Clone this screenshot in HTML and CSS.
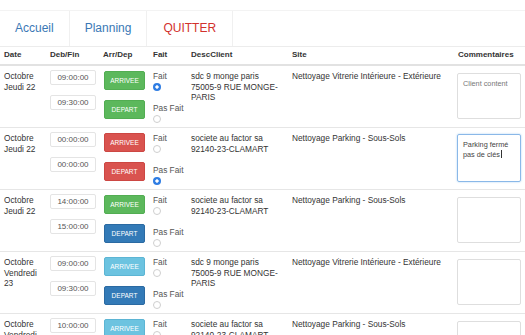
FILE: index.html
```html
<!DOCTYPE html>
<html lang="fr">
<head>
<meta charset="UTF-8">
<meta name="viewport" content="width=device-width, initial-scale=1.0">
<title>Planning</title>
<link rel="stylesheet" href="styles.css">
</head>
<body>

<div class="nav">
    <a href="#" class="tab">Accueil</a>
    <a href="#" class="tab">Planning</a>
    <a href="#" class="tab quit">QUITTER</a>
</div>

<table class="planning">
  <colgroup>
    <col class="c-date"><col class="c-time"><col class="c-btn"><col class="c-fait">
    <col class="c-desc"><col class="c-site"><col class="c-com">
  </colgroup>
  <thead>
    <tr>
      <th>Date</th><th>Deb/Fin</th><th>Arr/Dep</th><th>Fait</th>
      <th>DescClient</th><th>Site</th><th class="com">Commentaires</th>
    </tr>
  </thead>
  <tbody>
    <tr>
      <td>Octobre Jeudi 22</td>
      <td><div class="time">09:00:00</div><div class="time">09:30:00</div></td>
      <td><button class="btn green">ARRIVEE</button><button class="btn green">DEPART</button></td>
      <td class="fait">
        <label>Fait</label><input type="radio" name="r1" checked>
        <label class="pas">Pas Fait</label><input type="radio" name="r1">
      </td>
      <td class="desc">sdc 9 monge paris 75005-9 RUE MONGE-PARIS</td>
      <td>Nettoyage Vitrerie Intérieure - Extérieure</td>
      <td class="com"><textarea class="note" placeholder="Client content"></textarea></td>
    </tr>
    <tr>
      <td>Octobre Jeudi 22</td>
      <td><div class="time">00:00:00</div><div class="time">00:00:00</div></td>
      <td><button class="btn red">ARRIVEE</button><button class="btn red">DEPART</button></td>
      <td class="fait">
        <label>Fait</label><input type="radio" name="r2">
        <label class="pas">Pas Fait</label><input type="radio" name="r2" checked>
      </td>
      <td class="desc">societe au factor sa 92140-23-CLAMART</td>
      <td>Nettoyage Parking - Sous-Sols</td>
      <td class="com"><div class="note active">Parking fermé pas de clés<span class="caret"></span></div></td>
    </tr>
    <tr>
      <td>Octobre Jeudi 22</td>
      <td><div class="time">14:00:00</div><div class="time">15:00:00</div></td>
      <td><button class="btn green">ARRIVEE</button><button class="btn blue">DEPART</button></td>
      <td class="fait">
        <label>Fait</label><input type="radio" name="r3">
        <label class="pas">Pas Fait</label><input type="radio" name="r3">
      </td>
      <td class="desc">societe au factor sa 92140-23-CLAMART</td>
      <td>Nettoyage Parking - Sous-Sols</td>
      <td class="com"><textarea class="note"></textarea></td>
    </tr>
    <tr>
      <td>Octobre Vendredi 23</td>
      <td><div class="time">09:00:00</div><div class="time">09:30:00</div></td>
      <td><button class="btn info">ARRIVEE</button><button class="btn blue">DEPART</button></td>
      <td class="fait">
        <label>Fait</label><input type="radio" name="r4">
        <label class="pas">Pas Fait</label><input type="radio" name="r4">
      </td>
      <td class="desc">sdc 9 monge paris 75005-9 RUE MONGE-PARIS</td>
      <td>Nettoyage Vitrerie Intérieure - Extérieure</td>
      <td class="com"><textarea class="note"></textarea></td>
    </tr>
    <tr>
      <td>Octobre Vendredi 23</td>
      <td><div class="time">10:00:00</div><div class="time">11:00:00</div></td>
      <td><button class="btn info">ARRIVEE</button><button class="btn blue">DEPART</button></td>
      <td class="fait">
        <label>Fait</label><input type="radio" name="r5">
        <label class="pas">Pas Fait</label><input type="radio" name="r5">
      </td>
      <td class="desc">societe au factor sa 92140-23-CLAMART</td>
      <td>Nettoyage Parking - Sous-Sols</td>
      <td class="com"><textarea class="note"></textarea></td>
    </tr>
  </tbody>
</table>

</body>
</html>
```

FILE: styles.css
```css
body {
    margin: 0;
    padding-top: 10px;
    font-family: "Liberation Sans", Arial, sans-serif;
    font-size: 8.3px;
    color: #333333;
    background: #ffffff;
}

/* top tabs */
.nav {
    display: flex;
    border-top: 1px solid #f3f3f3;
    border-bottom: 1px solid #ececec;
}

.tab {
    padding: 0 15px;
    line-height: 35px;
    font-size: 12px;
    color: #3a78b5;
    text-decoration: none;
    border-right: 1px solid #f0f0f0;
}

.tab.quit {
    color: #d2322d;
    padding: 0 16px;
}

/* table */
.planning {
    width: 525px;
    table-layout: fixed;
    border-collapse: collapse;
}

.c-date { width: 46px; }
.c-time { width: 53px; }
.c-btn { width: 50px; }
.c-fait { width: 38px; }
.c-desc { width: 101px; }
.c-site { width: 166px; }
.c-com { width: 71px; }

.planning th {
    text-align: left;
    font-weight: bold;
    font-size: 8px;
    padding: 3px 4px 4px;
    line-height: 10px;
    border-bottom: 2px solid #e2e2e2;
}

.planning td {
    vertical-align: top;
    padding: 5px 4px 4px;
    line-height: 10.7px;
    border-top: 1px solid #e6e6e6;
}

.planning td.desc {
    padding-right: 8px;
}

.planning td.com {
    padding-left: 3px;
}

.time {
    width: 44px;
    height: 13px;
    margin-top: -1px;
    margin-bottom: 11px;
    border: 1px solid #e4e4e4;
    border-radius: 2px;
    color: #555555;
    text-align: center;
    line-height: 13px;
    font-size: 8px;
}

.time:last-child {
    margin-bottom: 0;
}

.btn {
    display: block;
    width: 41px;
    height: 19px;
    margin: 0 0 10px 1px;
    padding: 0;
    border: 1px solid transparent;
    border-radius: 2px;
    color: #ffffff;
    font-family: "Liberation Sans", Arial, sans-serif;
    font-size: 6.5px;
}

.btn:last-child {
    margin-bottom: 0;
}

.green { background-color: #5cb85c; border-color: #52ad52; }
.red { background-color: #d9534f; border-color: #cc4743; }
.blue { background-color: #337ab7; border-color: #2b6aa2; }
.info { background-color: #6cc3e0; border-color: #5cb5d4; }

.fait label {
    display: block;
    color: #555555;
    white-space: nowrap;
}

.fait .pas {
    margin-top: 12.6px;
}

.fait input {
    appearance: none;
    display: block;
    width: 8px;
    height: 8px;
    margin: 1px 0 0 0;
    border: 1px solid #cfcfcf;
    border-radius: 50%;
    background: #ffffff;
    box-sizing: border-box;
}

.fait input:checked {
    border: none;
    background: radial-gradient(circle, #ffffff 0 1.4px, #2f7de3 1.9px);
}

.note {
    display: block;
    width: 64px;
    height: 46px;
    margin-top: 2px;
    padding: 5px 5px;
    box-sizing: border-box;
    border: 1px solid #dedede;
    border-radius: 2px;
    resize: none;
    font-family: "Liberation Sans", Arial, sans-serif;
    font-size: 7.3px;
    line-height: 10px;
    color: #555555;
}

.note::placeholder {
    color: #777777;
}

.note.active {
    margin-top: 1px;
    height: 48px;
    color: #444444;
    border-color: #8ab8e8;
    box-shadow: 0 0 2px rgba(102, 175, 233, 0.6);
}

.caret {
    display: inline-block;
    width: 1px;
    height: 8px;
    margin-left: 1px;
    vertical-align: -1px;
    background: #333333;
}
```
